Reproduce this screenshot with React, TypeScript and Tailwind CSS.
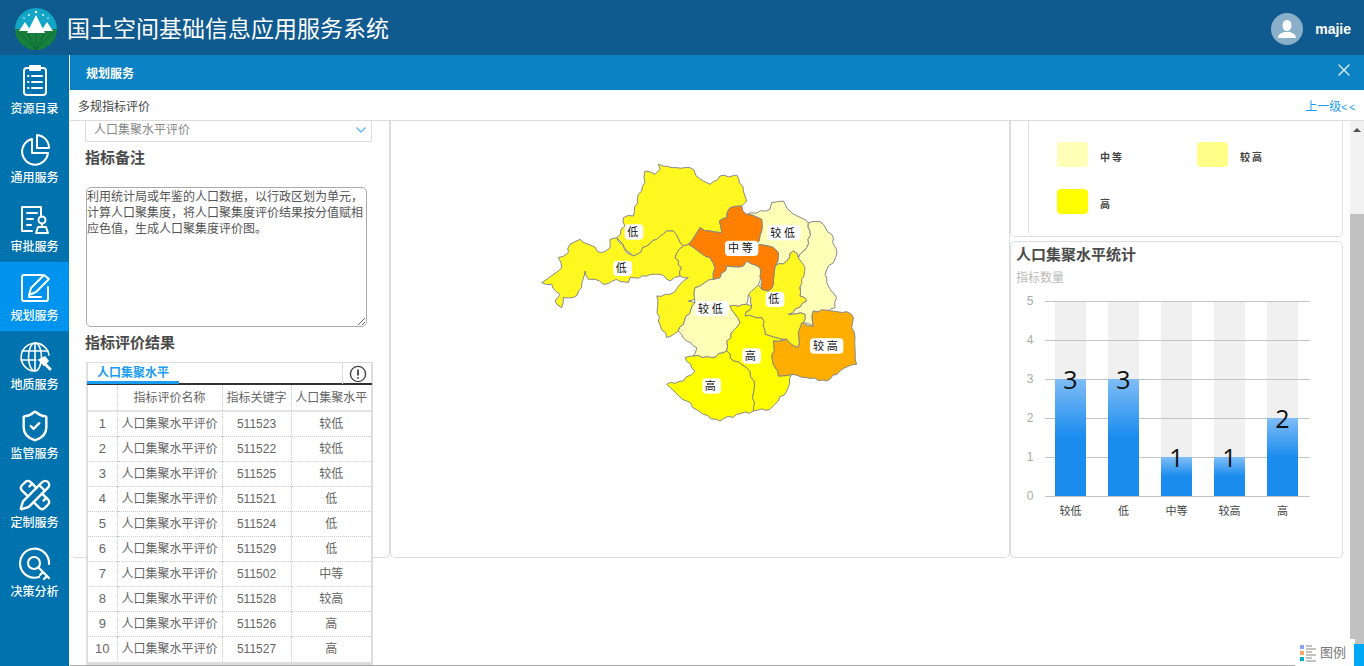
import { ShieldCheck, PencilRuler, X, ChevronDown } from "lucide-react";

const rows = [
  ["1", "511523", "较低"],
  ["2", "511522", "较低"],
  ["3", "511525", "较低"],
  ["4", "511521", "低"],
  ["5", "511524", "低"],
  ["6", "511529", "低"],
  ["7", "511502", "中等"],
  ["8", "511528", "较高"],
  ["9", "511526", "高"],
  ["10", "511527", "高"],
];

// traced from the map, units are 3x screen pixels
const regions = [
  { fill: "#fff820", pts: "385,40 400,45 440,50 480,50 520,90 540,100 570,75 620,72 640,120 650,150 635,165 600,170 590,200 568,210 575,245 540,240 510,230 475,280 460,285 430,240 410,240 380,265 350,285 310,315 290,300 270,270 260,260 285,225 280,200 310,195 325,130 345,95 345,60 375,70 390,55" },
  { fill: "#fff820", pts: "150,265 215,305 240,290 240,265 260,260 290,305 310,315 350,285 380,265 410,240 430,240 460,285 435,320 455,350 450,375 420,390 390,370 350,375 300,380 295,395 260,385 220,400 195,385 175,385 165,360 155,410 130,440 100,440 95,470 75,450 90,430 65,400 35,395 95,350 85,320 115,305 120,280" },
  { fill: "#fff820", pts: "435,320 460,285 475,280 540,320 555,350 550,385 495,410 495,445 475,450 495,455 445,540 410,560 385,510 380,435 420,430 450,400 475,380 450,375 455,350" },
  { fill: "#ffffb8", pts: "650,190 720,175 725,155 760,150 780,180 835,215 840,240 830,290 805,320 790,300 770,330 735,345 745,305 715,285 680,280 695,240 695,205" },
  { fill: "#ffffb8", pts: "835,215 870,212 905,250 920,310 885,370 895,405 920,440 915,470 890,485 850,480 850,525 820,515 825,490 775,490 830,450 810,435 805,320 830,290 840,240" },
  { fill: "#fff820", pts: "790,300 805,320 825,350 815,385 810,435 830,450 775,490 825,490 820,515 805,545 805,590 770,565 705,550 695,500 645,495 665,465 655,430 680,395 695,415 715,420 730,400 735,345 770,330" },
  { fill: "#ffffb8", pts: "640,345 650,330 690,350 690,390 655,430 650,460 600,465 630,515 590,570 590,600 545,620 490,615 500,590 470,570 445,540 495,455 495,410 550,385 570,380 590,345" },
  { fill: "#ffff00", pts: "600,465 650,460 665,465 645,495 695,500 705,550 770,565 730,570 730,640 745,675 785,670 775,710 745,750 720,775 670,780 672,690 650,650 610,630 590,600 590,570 630,515" },
  { fill: "#ffae00", pts: "815,515 850,525 850,480 950,482 970,500 965,530 975,560 980,640 930,660 890,690 830,680 785,670 745,675 730,640 730,570 770,565 805,590 805,545" },
  { fill: "#ffff00", pts: "465,620 490,615 545,620 590,600 610,630 650,650 672,690 670,780 620,790 570,810 520,790 470,750 410,700 460,690 495,660" },
  { fill: "#ff8000", pts: "600,170 635,165 650,190 695,205 695,240 680,280 715,285 745,305 735,345 730,400 715,420 695,415 690,350 650,330 640,345 590,345 570,380 550,385 555,350 540,320 475,280 510,230 540,240 575,245 568,210 590,200" },
];

// county borders are jagged in the source map; roughen each edge the same way from both sides
function roughen(pts: string) {
  const p = pts.split(" ").map((s) => s.split(",").map(Number));
  const out: string[] = [];
  p.forEach((a, i) => {
    const b = p[(i + 1) % p.length];
    out.push(a.join(","));
    const swap = a[0] > b[0] || (a[0] === b[0] && a[1] > b[1]);
    const [s, e] = swap ? [b, a] : [a, b];
    const len = Math.hypot(e[0] - s[0], e[1] - s[1]);
    const steps = Math.floor(len / 12);
    const mids: string[] = [];
    for (let k = 1; k < steps; k++) {
      const t = k / steps;
      const h = Math.sin(s[0] * 12.9 + s[1] * 78.2 + e[0] * 3.7 + k * 37.7) * 43758.5;
      const off = (h - Math.floor(h) - 0.5) * 9;
      const nx = -(e[1] - s[1]) / len;
      const ny = (e[0] - s[0]) / len;
      mids.push(`${s[0] + (e[0] - s[0]) * t + nx * off},${s[1] + (e[1] - s[1]) * t + ny * off}`);
    }
    if (swap) mids.reverse();
    out.push(...mids);
  });
  return out.join(" ");
}

const mapLabels = [
  { x: 312, y: 243, t: "低" },
  { x: 278, y: 352, t: "低" },
  { x: 635, y: 292, t: "中等" },
  { x: 762, y: 245, t: "较低" },
  { x: 545, y: 473, t: "较低" },
  { x: 735, y: 445, t: "低" },
  { x: 890, y: 585, t: "较高" },
  { x: 665, y: 615, t: "高" },
  { x: 545, y: 705, t: "高" },
];

const bars = [
  { label: "较低", value: 3, x: 10 },
  { label: "低", value: 3, x: 63 },
  { label: "中等", value: 1, x: 116 },
  { label: "较高", value: 1, x: 169 },
  { label: "高", value: 2, x: 222 },
];

function Logo() {
  return (
    <svg width="42" height="42" viewBox="0 0 42 42" className="shrink-0">
      <defs>
        <clipPath id="logoClip">
          <circle cx="21" cy="21" r="21" />
        </clipPath>
      </defs>
      <g clipPath="url(#logoClip)">
        <rect width="42" height="21" fill="#12a5c6" />
        <rect y="21" width="42" height="21" fill="#17803c" />
        <path d="M21 42L4 24M21 42L12 24M21 42V24M21 42L30 24M21 42L38 24" stroke="#0f6a34" strokeWidth="1" />
        <path d="M12 25L21 7L30 25Z" fill="#fff" />
        <path d="M4 23L10 14L16 23Z" fill="#fff" />
        <path d="M26 23L32 14L38 23Z" fill="#fff" />
      </g>
      <g fill="#fff">
        <circle cx="21" cy="4" r="1.2" />
        <circle cx="14" cy="7" r="0.9" />
        <circle cx="28" cy="7" r="0.9" />
        <circle cx="9" cy="10" r="0.8" />
        <circle cx="33" cy="10" r="0.8" />
      </g>
    </svg>
  );
}

function IconCatalog() {
  return (
    <svg width="34" height="34" viewBox="0 0 34 34" fill="none" stroke="#fff" strokeWidth="2" strokeLinecap="round">
      <rect x="6" y="4" width="22" height="27" rx="3" />
      <path d="M12 2h10v4H12z" strokeLinejoin="round" />
      <path d="M14 12h10M14 18h10M14 24h10" />
      <path d="M10 12h.5M10 18h.5M10 24h.5" />
    </svg>
  );
}

function IconPie() {
  return (
    <svg width="34" height="34" viewBox="0 0 34 34" fill="none" stroke="#fff" strokeWidth="2" strokeLinejoin="round">
      <path d="M14 6A13 13 0 1 0 30 20H14Z" />
      <path d="M19 2A13 13 0 0 1 31 15H19Z" />
    </svg>
  );
}

function IconApprove() {
  return (
    <svg width="34" height="34" viewBox="0 0 34 34" fill="none" stroke="#fff" strokeWidth="2" strokeLinecap="round" strokeLinejoin="round">
      <path d="M23 15V5H4v24h10" />
      <path d="M9 11h10M9 17h6M9 23h4" />
      <circle cx="24" cy="18" r="3.5" />
      <path d="M24 21.5v2M18 31l2-6h8l2 6Z" />
    </svg>
  );
}

function IconPlan() {
  return (
    <svg width="34" height="34" viewBox="0 0 34 34" fill="none" stroke="#fff" strokeWidth="2" strokeLinecap="round" strokeLinejoin="round">
      <path d="M24 4H6a2 2 0 0 0-2 2v22a2 2 0 0 0 2 2h22a2 2 0 0 0 2-2V16" />
      <path d="M11 24l2-7L26 4l5 4-13 13Z" />
      <path d="M11 26h12" />
    </svg>
  );
}

function IconGlobe() {
  return (
    <svg width="34" height="34" viewBox="0 0 34 34" fill="none" stroke="#fff" strokeWidth="1.6" strokeLinecap="round">
      <path d="M31 15A14 14 0 1 0 15 31" />
      <ellipse cx="17" cy="17" rx="6.5" ry="14" />
      <path d="M4 11h26M3 20h15M17 3v28" />
      <path d="M21 20l6-3 3 4-4 4Z" fill="#fff" />
      <path d="M27 24l5 5" strokeWidth="3" />
    </svg>
  );
}

function IconAnalysis() {
  return (
    <svg width="34" height="34" viewBox="0 0 34 34" fill="none" stroke="#fff" strokeWidth="2.2" strokeLinecap="round">
      <path d="M21 30A14.5 14.5 0 1 1 31 17" />
      <circle cx="16" cy="16" r="6" />
      <path d="M20.5 20.5L31 31M25 25l-3 3M29 29l-3 3" />
    </svg>
  );
}

const navItems = [
  { label: "资源目录", icon: <IconCatalog /> },
  { label: "通用服务", icon: <IconPie /> },
  { label: "审批服务", icon: <IconApprove /> },
  { label: "规划服务", icon: <IconPlan />, active: true },
  { label: "地质服务", icon: <IconGlobe /> },
  { label: "监管服务", icon: <ShieldCheck size={34} strokeWidth={1.7} color="#fff" /> },
  { label: "定制服务", icon: <PencilRuler size={34} strokeWidth={1.7} color="#fff" /> },
  { label: "决策分析", icon: <IconAnalysis /> },
];

function LegendSwatch({ color, label }: { color: string; label: string }) {
  return (
    <div className="flex items-center gap-3 w-[140px]">
      <div className="w-[31px] h-[25px] rounded-[4px]" style={{ background: color }} />
      <span className="pt-[5px] text-[10px] font-bold text-[#444] tracking-[2px]">{label}</span>
    </div>
  );
}

function BarChart() {
  return (
    <svg width="320" height="250" viewBox="0 0 320 250" className="block">
      <defs>
        <linearGradient id="bar3" x1="0" y1="0" x2="0" y2="1">
          <stop offset="0" stopColor="#80bdf6" />
          <stop offset="0.5" stopColor="#1a8cee" />
          <stop offset="1" stopColor="#1a8cee" />
        </linearGradient>
      </defs>
      {bars.map((b) => (
        <rect key={b.label} x={33 + b.x} y="26" width="31" height="195" fill="#f0f0f0" />
      ))}
      {[0, 1, 2, 3, 4, 5].map((v) => (
        <g key={v}>
          <line x1="33" x2="298" y1={221 - v * 39 + 0.5} y2={221 - v * 39 + 0.5} stroke="#c4c4c4" />
          <text x="18" y={225 - v * 39} textAnchor="middle" fontSize="12" fill="#aaa">{v}</text>
        </g>
      ))}
      {bars.map((b) => (
        <g key={b.label}>
          <rect x={33 + b.x} y={221 - b.value * 39} width="31" height={b.value * 39} fill="url(#bar3)" />
          <text x={33 + b.x + 15.5} y={221 - b.value * 39 + 3} textAnchor="middle" fontSize="25" fill="#111" fontFamily="'Open Sans',sans-serif" dominantBaseline="middle">{b.value}</text>
          <text x={33 + b.x + 15.5} y="240" textAnchor="middle" fontSize="11" fill="#444">{b.label}</text>
        </g>
      ))}
    </svg>
  );
}

export default function App() {
  return (
    <div className="w-[1364px] h-[666px] overflow-hidden flex flex-col bg-white font-['Liberation_Sans','Noto_Sans_CJK_SC',sans-serif]">
      {/* top bar */}
      <div className="h-[55px] shrink-0 bg-[#0f5a8f] flex items-center pl-[15px] pr-[13px] pt-[3px] text-white">
        <Logo />
        <div className="ml-[10px] text-[23px] leading-none">国土空间基础信息应用服务系统</div>
        <div className="ml-auto flex items-center gap-3">
          <div className="w-8 h-8 rounded-full bg-[#8aafc9] overflow-hidden flex items-center justify-center">
            <svg width="20" height="20" viewBox="0 0 20 20" fill="#fff">
              <ellipse cx="10" cy="6.5" rx="4.5" ry="5.5" />
              <path d="M1 19c0-4 4-5 6-6h6c2 1 6 2 6 6Z" />
            </svg>
          </div>
          <span className="text-[14px] font-bold">majie</span>
        </div>
      </div>

      <div className="flex flex-1 min-h-0">
        {/* side nav */}
        <div className="w-[69px] shrink-0 bg-[#0072ad]">
          {navItems.map((item) => (
            <div
              key={item.label}
              className={
                item.active
                  ? "h-[69px] flex flex-col items-center pt-[9px] gap-[3px] bg-[#0094ef] text-white"
                  : "h-[69px] flex flex-col items-center pt-[9px] gap-[3px] text-white"
              }
            >
              {item.icon}
              <span className="text-[12px] leading-[16px] font-medium">{item.label}</span>
            </div>
          ))}
        </div>

        {/* panel */}
        <div className="flex-1 min-w-0 flex flex-col ml-px border-b border-[#aaaaaa]">
          <div className="h-[35px] shrink-0 bg-[#0a82c4] flex items-center justify-between pl-[16px] pr-[10px] text-white">
            <span className="text-[12px] font-bold pt-[2px]">规划服务</span>
            <X size={20} strokeWidth={1.6} color="#d8eefb" className="-mt-[6px]" />
          </div>
          <div className="h-[30px] shrink-0 mt-px border-b border-[#dddddd] flex items-center justify-between pl-[8px] pr-[7px] pt-[2px] text-[12px]">
            <span className="text-[#444]">多规指标评价</span>
            <span className="text-[#1a9cf0]">上一级<span className="text-[10px] tracking-[2px]">&lt;&lt;</span></span>
          </div>

          <div className="flex-1 min-h-0 flex">
            <div className="flex-1 min-w-0">
              <div className="flex h-[437px]">
                {/* left column */}
                <div className="w-[320px] shrink-0 border-r border-b border-[#dddddd] rounded-b-[5px] pl-[15px]">
                  <div className="w-[287px] h-[21px] border border-t-0 border-[#dddddd] flex items-center justify-between pl-2 pr-[2px] pb-[2px] text-[12px] text-[#888]">
                    <span>人口集聚水平评价</span>
                    <ChevronDown size={16} strokeWidth={2.5} color="#6bbcf0" />
                  </div>
                  <div className="mt-[7px] text-[15px] font-bold text-[#4a4a4a] leading-[18px]">指标备注</div>
                  <textarea
                    readOnly
                    defaultValue="利用统计局或年鉴的人口数据，以行政区划为单元，计算人口聚集度，将人口聚集度评价结果按分值赋相应色值，生成人口聚集度评价图。"
                    className="block mt-[20px] ml-px w-[281px] h-[140px] border border-[#aaaaaa] rounded-[5px] text-[12px] leading-[16px] text-[#555] pt-px outline-none"
                  />
                  <div className="mt-[7px] text-[15px] font-bold text-[#4a4a4a] leading-[18px]">指标评价结果</div>
                  <div className="mt-[10px] ml-px w-[287px] bg-white border-x-2 border-b-[3px] border-[#dddddd] relative">
                    <div className="h-[23px] border-t border-[#dddddd] border-b-2 border-b-[#333] flex justify-between -mx-[1px]">
                      <div className="w-[92px] h-[21px] border-b-[3px] border-[#1a9cf0] text-[12px] font-bold text-[#1a9cf0] text-center leading-[20px]">人口集聚水平</div>
                      <div className="w-[30px] h-[21px] border-l border-[#dddddd] flex items-center justify-center">
                        <svg width="18" height="18" viewBox="0 0 18 18" fill="none" stroke="#444" strokeWidth="1.4">
                          <circle cx="9" cy="9" r="7.6" />
                          <path d="M9 4.5v6M9 12.3v1.4" strokeWidth="1.8" />
                        </svg>
                      </div>
                    </div>
                    <table className="w-full table-fixed border-collapse text-[12px] text-[#666]">
                      <thead>
                        <tr className="h-[26px] border-b-2 border-[#e4e4e4]">
                          <th className="w-[29px] font-normal border-r border-dotted border-[#ccc]"></th>
                          <th className="w-[105px] font-normal border-r border-dotted border-[#ccc]">指标评价名称</th>
                          <th className="w-[69px] font-normal border-r border-dotted border-[#ccc]">指标关键字</th>
                          <th className="font-normal whitespace-nowrap">人口集聚水平</th>
                        </tr>
                      </thead>
                      <tbody>
                        {rows.map((r) => (
                          <tr key={r[0]} className="h-[25px] border-b border-dotted border-[#ccc] last:border-b-0">
                            <td className="text-center border-r border-dotted border-[#ccc] p-0 text-[13px]">{r[0]}</td>
                            <td className="text-center border-r border-dotted border-[#ccc] p-0 whitespace-nowrap">人口集聚水平评价</td>
                            <td className="text-center border-r border-dotted border-[#ccc] p-0">{r[1]}</td>
                            <td className="text-center p-0">{r[2]}</td>
                          </tr>
                        ))}
                      </tbody>
                    </table>
                    <div className="h-px" />
                  </div>
                </div>

                {/* map */}
                <div className="w-[620px] shrink-0 border-x border-b border-[#dddddd] rounded-b-[5px] flex justify-center pt-[30px]">
                  <svg width="340" height="280" viewBox="0 0 1020 840" className="block">
                    {regions.map((r, i) => (
                      <polygon key={i} points={roughen(r.pts)} fill={r.fill} stroke="#888" strokeWidth="3" strokeLinejoin="round" />
                    ))}
                    {mapLabels.map((l) => (
                      <g key={l.x}>
                        <rect x={l.x - (l.t.length * 22 + 6)} y={l.y - 23} width={l.t.length * 44 + 12} height="46" rx="12" fill="#fff" />
                        <text x={l.x} y={l.y + 12} textAnchor="middle" fontSize="33" fill="#111" letterSpacing="8">{l.t}</text>
                      </g>
                    ))}
                  </svg>
                </div>

                {/* legend + stats */}
                <div className="w-[333px] shrink-0 flex flex-col">
                  <div className="h-[116px] border-x border-b border-[#dddddd] rounded-b-[5px] pl-[17px]">
                    <div className="h-[115px] border-l border-[#dddddd] rounded-bl-[5px] pl-[28px] pt-[21px] flex flex-wrap content-start gap-y-[22px]">
                      <LegendSwatch color="#ffffb8" label="中等" />
                      <LegendSwatch color="#ffff88" label="较高" />
                      <LegendSwatch color="#ffff00" label="高" />
                    </div>
                  </div>
                  <div className="mt-[4px] flex-1 border border-[#dddddd] rounded-[5px] pl-[5px] pt-[4px] relative">
                    <div className="text-[15px] font-bold text-[#4a4a4a] leading-[18px]">人口集聚水平统计</div>
                    <div className="mt-[6px] text-[12px] text-[#bbb] leading-[16px]">指标数量</div>
                    <div className="-ml-[5px] mt-[-11px] pl-px">
                      <BarChart />
                    </div>
                  </div>
                </div>
              </div>
            </div>

            {/* scrollbar */}
            <div className="w-[14px] shrink-0 bg-[#f1f1f1] flex flex-col">
              <div className="h-[93px] flex justify-center pt-[7px]">
                <div className="w-0 h-0 border-x-[4px] border-x-transparent border-b-[4px] border-b-[#505050]" />
              </div>
              <div className="flex-1 bg-[#c1c1c1]" />
            </div>
          </div>
        </div>
      </div>

      {/* legend toggle */}
      <div className="absolute left-[1295px] top-[639px] w-[60px] h-[27px] bg-white flex items-center pl-[5px] gap-[3px]">
        <svg width="17" height="18" viewBox="0 0 17 18">
          <rect x="0" y="1" width="4" height="4" fill="#8aa0f0" />
          <rect x="0" y="7" width="4" height="4" fill="#f4a860" />
          <rect x="0" y="13" width="4" height="4" fill="#00b0c8" />
          <path d="M6 2h6M6 5h10M6 8h6M6 11h10M6 14h6M6 17h10" stroke="#888" strokeWidth="1" />
        </svg>
        <span className="text-[13px] text-[#777]">图例</span>
      </div>
      <div className="absolute left-[1354px] top-[644px] w-[10px] h-[22px] bg-[#00a8f8]" />
    </div>
  );
}
